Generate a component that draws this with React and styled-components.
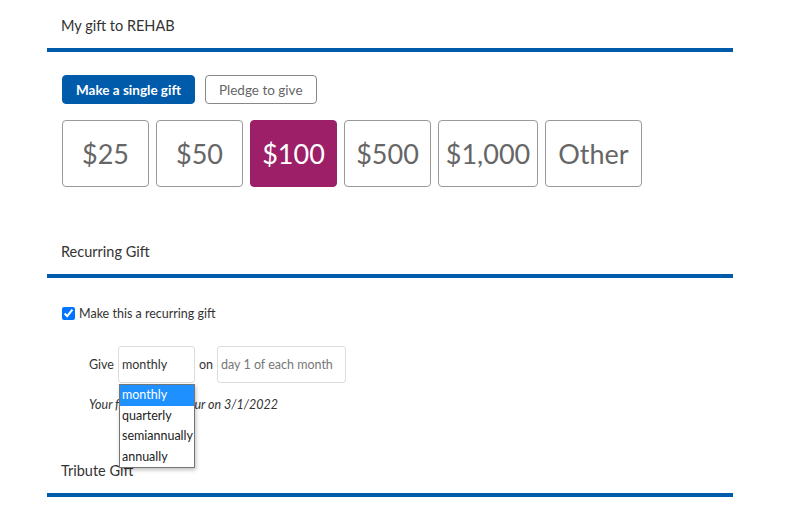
import React, { useState } from "react";
import styled, { createGlobalStyle } from "styled-components";

const GlobalStyle = createGlobalStyle`
  body {
    margin: 0;
    background: #fff;
    font-family: Lato, "Open Sans", sans-serif;
    color: #333;
  }
`;

const Page = styled.div`
  width: 686px;
  padding-left: 47px;
`;

const SectionHeader = styled.div`
  box-sizing: content-box;
  height: 33px;
  padding: 15px 0 0 14px;
  margin-top: ${(p) => p.$top || 0}px;
  border-bottom: 4px solid #005bab;
  font-size: 14.5px;
  line-height: 22px;
  color: #333;
`;

const Body = styled.div`
  padding-left: 15px;
`;

const ToggleRow = styled.div`
  display: flex;
  gap: 10px;
  margin-top: 23px;
`;

const ToggleButton = styled.button`
  height: 29px;
  box-sizing: border-box;
  padding: 0 13px;
  border-radius: 4px;
  font-family: inherit;
  font-size: 13.5px;
  border: 1px solid ${(p) => (p.$active ? "#005bab" : "#888")};
  background: ${(p) => (p.$active ? "#005bab" : "#fff")};
  color: ${(p) => (p.$active ? "#fff" : "#666")};
  font-weight: ${(p) => (p.$active ? 700 : 400)};
  cursor: pointer;
`;

const AmountRow = styled.div`
  display: flex;
  gap: 7px;
  margin-top: 16px;
`;

const AmountButton = styled.button`
  width: ${(p) => p.$w}px;
  height: 67px;
  box-sizing: border-box;
  padding: 0;
  border-radius: 4px;
  font-family: inherit;
  font-size: 27px;
  border: 1px solid ${(p) => (p.$active ? "#9c1f68" : "#999")};
  background: ${(p) => (p.$active ? "#9c1f68" : "#fff")};
  color: ${(p) => (p.$active ? "#fff" : "#666")};
  cursor: pointer;
`;

const CheckRow = styled.label`
  display: flex;
  align-items: center;
  gap: 4px;
  margin-top: 28px;
  font-size: 12.5px;
  color: #333;
`;

const Check = styled.input`
  margin: 0;
  width: 13px;
  height: 13px;
  accent-color: #0075ff;
`;

const GiveRow = styled.div`
  display: flex;
  align-items: center;
  gap: 4px;
  margin-top: 25px;
  padding-left: 27px;
  font-size: 12.5px;
  color: #333;
`;

const SelectWrap = styled.div`
  position: relative;
`;

const Select = styled.select`
  appearance: none;
  width: 77px;
  height: 37px;
  box-sizing: border-box;
  padding: 0 3px;
  border: 1px solid #ddd;
  border-radius: 3px;
  background: #fff;
  font-family: inherit;
  font-size: 12.5px;
  color: #333;
  outline: none;
`;

const DayInput = styled.input`
  width: 129px;
  height: 37px;
  box-sizing: border-box;
  padding: 0 3px;
  border: 1px solid #ddd;
  border-radius: 3px;
  font-family: inherit;
  font-size: 12.5px;
  &::placeholder {
    color: #777;
  }
`;

const OptionList = styled.ul`
  position: absolute;
  top: 38px;
  left: 1px;
  width: 76px;
  box-sizing: border-box;
  margin: 0;
  padding: 0;
  list-style: none;
  background: #fff;
  border: 1px solid #767676;
  box-shadow: 1px 2px 4px rgba(0, 0, 0, 0.25);
  z-index: 2;
`;

const Option = styled.li`
  height: 20.5px;
  line-height: 20px;
  padding: 0 2px;
  font-size: 12.5px;
  background: ${(p) => (p.$active ? "#1e90ff" : "transparent")};
  color: ${(p) => (p.$active ? "#fff" : "#222")};
`;

const Note = styled.div`
  margin-top: 14px;
  padding-left: 27px;
  font-size: 12.5px;
  line-height: 16px;
  font-style: italic;
  color: #333;
`;

const amounts = [
  { label: "$25", w: 87 },
  { label: "$50", w: 87 },
  { label: "$100", w: 87 },
  { label: "$500", w: 87 },
  { label: "$1,000", w: 100 },
  { label: "Other", w: 97 },
];
const frequencies = ["monthly", "quarterly", "semiannually", "annually"];

export default function App() {
  const [amount, setAmount] = useState("$100");
  const [freq, setFreq] = useState("monthly");

  return (
    <>
      <GlobalStyle />
      <Page>
        <SectionHeader>My gift to REHAB</SectionHeader>
        <Body>
          <ToggleRow>
            <ToggleButton $active>Make a single gift</ToggleButton>
            <ToggleButton>Pledge to give</ToggleButton>
          </ToggleRow>
          <AmountRow>
            {amounts.map((a) => (
              <AmountButton
                key={a.label}
                $w={a.w}
                $active={a.label === amount}
                onClick={() => setAmount(a.label)}
              >
                {a.label}
              </AmountButton>
            ))}
          </AmountRow>
        </Body>

        <SectionHeader $top={39}>Recurring Gift</SectionHeader>
        <Body>
          <CheckRow>
            <Check type="checkbox" defaultChecked />
            Make this a recurring gift
          </CheckRow>
          <GiveRow>
            Give
            <SelectWrap>
              <Select value={freq} onChange={(e) => setFreq(e.target.value)}>
                {frequencies.map((f) => (
                  <option key={f} value={f}>
                    {f}
                  </option>
                ))}
              </Select>
              <OptionList>
                {frequencies.map((f) => (
                  <Option key={f} $active={f === freq} onClick={() => setFreq(f)}>
                    {f}
                  </Option>
                ))}
              </OptionList>
            </SelectWrap>
            on
            <DayInput placeholder="day 1 of each month" />
          </GiveRow>
          <Note>Your first gift will recur on 3/1/2022</Note>
        </Body>

        <SectionHeader $top={32}>Tribute Gift</SectionHeader>
      </Page>
    </>
  );
}
